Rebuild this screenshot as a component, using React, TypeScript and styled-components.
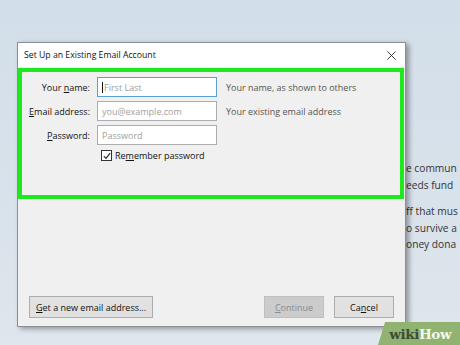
import styled, { createGlobalStyle } from "styled-components";

const Global = createGlobalStyle`
    html, body {
        margin: 0;
        padding: 0;
    }
    body {
        width: 460px;
        height: 345px;
        overflow: hidden;
        font-family: "Open Sans", "Noto Sans", sans-serif;
    }
`;

const Page = styled.div`
    position: relative;
    width: 460px;
    height: 345px;
    overflow: hidden;
    display: flex;
    background: linear-gradient(180deg, #d2dee9 0%, #d8e2eb 55%, #dfe6ec 100%);
`;

const Dialog = styled.div`
    flex: none;
    width: 387px;
    height: 283px;
    margin: 42px 0 0 17px;
    border: 1px solid #8a8f96;
    background: #f0f0f0;
    box-shadow: 3px 2px 5px rgba(0, 0, 0, 0.35);
    display: flex;
    flex-direction: column;
    position: relative;
    z-index: 1;
`;

const TitleBar = styled.div`
    height: 24px;
    background: #ffffff;
    display: flex;
    align-items: center;
    justify-content: space-between;
    padding: 0 8px 0 6px;
    font-size: 8.7px;
    color: #111;
`;

const CloseIcon = styled.svg`
    width: 9px;
    height: 9px;
    margin-right: 1px;
`;

const Body = styled.div`
    flex: 1;
    display: flex;
    flex-direction: column;
    padding: 1px 0 0 0;
`;

const Highlight = styled.div`
    height: 118px;
    margin: 0 1px 0 0;
    border: 4px solid #1ee81e;
    padding: 5px 0 0 0;
    display: flex;
    flex-direction: column;
`;

const Form = styled.div`
    display: grid;
    grid-template-columns: 68px 120px auto;
    column-gap: 7px;
    row-gap: 4px;
    align-items: center;
`;

const Label = styled.label`
    font-size: 9px;
    color: #111;
    text-align: right;
`;

const Key = styled.span`
    text-decoration: underline;
    text-underline-offset: 1px;
`;

const Input = styled.div<{ $focus?: boolean }>`
    height: 18px;
    border: 1px solid ${(p) => (p.$focus ? "#5a9fd6" : "#adadad")};
    background: #ffffff;
    display: flex;
    align-items: center;
    padding-left: 4px;
    font-size: 9px;
    color: #a0a0a0;
`;

const Caret = styled.span`
    width: 1px;
    height: 11px;
    background: #111;
    margin-right: 1px;
`;

const Hint = styled.span`
    font-size: 9px;
    color: #555;
    padding-left: 2px;
`;

const CheckRow = styled.div`
    display: flex;
    align-items: center;
    gap: 3px;
    margin: 4px 0 0 79px;
    font-size: 9px;
    color: #111;
`;

const Box = styled.span`
    width: 9px;
    height: 9px;
    border: 1px solid #333;
    background: #fff;
    display: flex;
    align-items: center;
    justify-content: center;
`;

const Footer = styled.div`
    margin-top: auto;
    display: flex;
    align-items: center;
    padding: 0 11px 8px 11px;
`;

const Button = styled.button<{ $disabled?: boolean; $width?: number }>`
    height: 22px;
    padding: 0 6px;
    width: ${(p) => (p.$width ? `${p.$width}px` : "auto")};
    border: 1px solid ${(p) => (p.$disabled ? "#bfbfbf" : "#adadad")};
    background: ${(p) => (p.$disabled ? "#cccccc" : "#e1e1e1")};
    color: ${(p) => (p.$disabled ? "#8a8a8a" : "#111")};
    font-family: "Open Sans", "Noto Sans", sans-serif;
    font-size: 9px;
    cursor: default;
`;

const Spacer = styled.div`
    flex: 1;
`;

const Gap = styled.div`
    width: 10px;
`;

const WebText = styled.div`
    flex: none;
    padding-top: 160px;
    display: flex;
    flex-direction: column;
    font-size: 10.2px;
    color: #333;
    line-height: 16.5px;
    white-space: nowrap;
`;

const Para = styled.p`
    margin: 0 0 10px 0;
`;

const Logo = styled.div`
    position: absolute;
    left: 378px;
    bottom: 0;
    width: 100px;
    height: 23px;
    background: #90b371;
    transform: skewX(-17deg);
    transform-origin: bottom left;
    display: flex;
    align-items: center;
    z-index: 2;
`;

const LogoText = styled.span`
    transform: skewX(17deg);
    font-family: "DejaVu Serif", "Liberation Serif", serif;
    font-weight: bold;
    font-size: 13.5px;
    color: #3e4b37;
    margin-left: 8px;
    margin-top: 1px;
    letter-spacing: -0.4px;
`;

const How = styled.span`
    color: #f4f7ee;
`;

export default function App() {
    return (
        <>
            <Global />
            <Page>
                <Dialog>
                    <TitleBar>
                        <span>Set Up an Existing Email Account</span>
                        <CloseIcon viewBox="0 0 10 10">
                            <path d="M0.5 0.5 L9.5 9.5 M9.5 0.5 L0.5 9.5" stroke="#222" strokeWidth="1" />
                        </CloseIcon>
                    </TitleBar>
                    <Body>
                        <Highlight>
                            <Form>
                                <Label>
                                    Your <Key>n</Key>ame:
                                </Label>
                                <Input $focus>
                                    <Caret />
                                    First Last
                                </Input>
                                <Hint>Your name, as shown to others</Hint>

                                <Label>
                                    <Key>E</Key>mail address:
                                </Label>
                                <Input>you@example.com</Input>
                                <Hint>Your existing email address</Hint>

                                <Label>
                                    <Key>P</Key>assword:
                                </Label>
                                <Input>Password</Input>
                                <span />
                            </Form>
                            <CheckRow>
                                <Box>
                                    <svg width="8" height="8" viewBox="0 0 8 8">
                                        <path d="M0.8 4.2 L3 6.4 L7.2 1.2" stroke="#222" strokeWidth="1.1" fill="none" />
                                    </svg>
                                </Box>
                                <span>
                                    Re<Key>m</Key>ember password
                                </span>
                            </CheckRow>
                        </Highlight>
                        <Footer>
                            <Button>
                                <Key>G</Key>et a new email address...
                            </Button>
                            <Spacer />
                            <Button $disabled $width={60}>
                                <Key>C</Key>ontinue
                            </Button>
                            <Gap />
                            <Button $width={60}>
                                Ca<Key>n</Key>cel
                            </Button>
                        </Footer>
                    </Body>
                </Dialog>
                <WebText>
                    <Para>
                        e commun
                        <br />
                        eeds fund
                    </Para>
                    <Para>
                        ff that mus
                        <br />
                        o survive a
                        <br />
                        oney dona
                    </Para>
                </WebText>
                <Logo>
                    <LogoText>
                        wiki<How>How</How>
                    </LogoText>
                </Logo>
            </Page>
        </>
    );
}
